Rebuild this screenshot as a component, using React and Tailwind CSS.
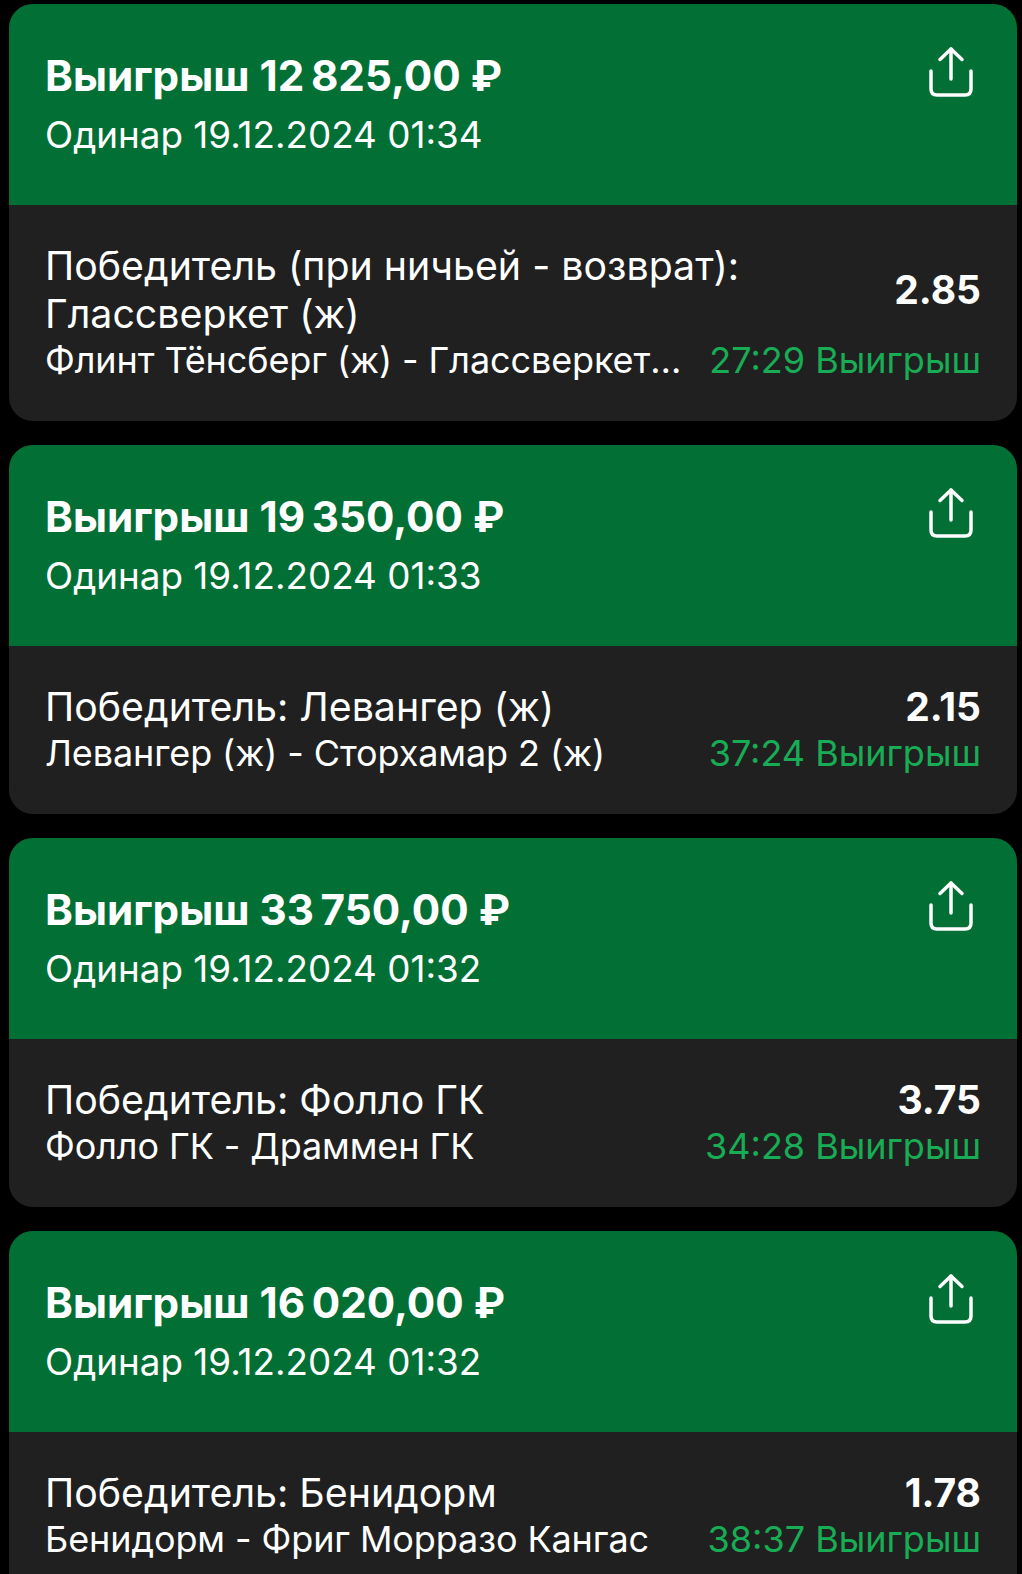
const cards = [
  { win: "12\u2009825,00 ₽", time: "01:34", lines: ["Победитель (при ничьей - возврат):", "Глассверкет (ж)"], match: "Флинт Тёнсберг (ж) - Глассверкет (ж)", odd: "2.85", score: "27:29" },
  { win: "19\u2009350,00 ₽", time: "01:33", lines: ["Победитель: Левангер (ж)"], match: "Левангер (ж) - Сторхамар 2 (ж)", odd: "2.15", score: "37:24" },
  { win: "33\u2009750,00 ₽", time: "01:32", lines: ["Победитель: Фолло ГК"], match: "Фолло ГК - Драммен ГК", odd: "3.75", score: "34:28" },
  { win: "16\u2009020,00 ₽", time: "01:32", lines: ["Победитель: Бенидорм"], match: "Бенидорм - Фриг Морразо Кангас", odd: "1.78", score: "38:37" },
];

function ShareIcon() {
  return (
    <svg width="44" height="52" viewBox="0 0 44 52" fill="none" stroke="#ffffff" strokeWidth="3.5" strokeLinecap="round" strokeLinejoin="round" className="shrink-0">
      <path d="M22 3V33" />
      <path d="M11 13.5L22 3L33 13.5" />
      <path d="M2 25V43C2 47 4 49 8 49H36C40 49 42 47 42 43V25" />
    </svg>
  );
}

function Card({ c }) {
  return (
    <div className="shrink-0 rounded-[24px] overflow-hidden bg-[#202020]">
      <div className="h-[201px] bg-[#026f35] pl-[36px] pr-[44px] pt-[47px] flex justify-between items-start">
        <div>
          <div className="text-[42.2px] leading-[50px] font-bold text-white">Выигрыш {c.win}</div>
          <div className="text-[36.8px] leading-[44px] mt-[12px] text-white">Одинар 19.12.2024 {c.time}</div>
        </div>
        <div className="mt-[-5px]"><ShareIcon /></div>
      </div>
      <div className="pl-[36px] pr-[36px] pt-[37px] pb-[39px] flex flex-col">
        <div className="flex justify-between items-center">
          <div>
            {c.lines.map((l) => (
              <div key={l} className="text-[39.3px] leading-[48px] text-white">{l}</div>
            ))}
          </div>
          <div className="shrink-0 text-[39px] leading-[48px] font-bold text-white">{c.odd}</div>
        </div>
        <div className="flex justify-between gap-[20px]">
          <div className="min-w-0 flex-1 text-[36px] leading-[44px] tracking-[-0.1px] text-white truncate">{c.match}</div>
          <div className="shrink-0 text-[36px] leading-[44px] text-[#18ad55]">{c.score} Выигрыш</div>
        </div>
      </div>
    </div>
  );
}

export default function App() {
  return (
    <div className="h-[1574px] overflow-hidden bg-black pl-[9px] pr-[5px] pt-[4px] flex flex-col gap-[24px] font-['Inter',sans-serif]">
      {cards.map((c) => (
        <Card key={c.win} c={c} />
      ))}
    </div>
  );
}
